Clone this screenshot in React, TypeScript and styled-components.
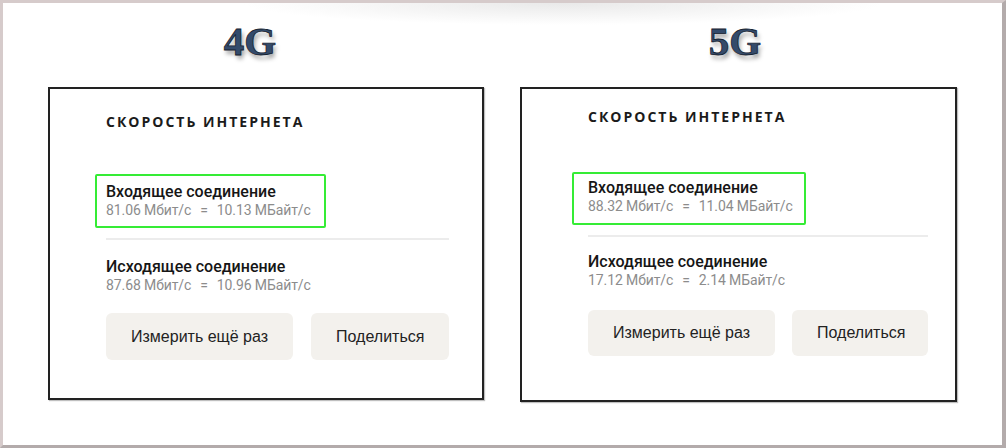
import React from "react";
import styled, { createGlobalStyle } from "styled-components";

const GlobalStyle = createGlobalStyle`
  html, body { margin: 0; padding: 0; background: #ffffff; }
  * { box-sizing: border-box; }
`;

type Spacing = {
  pt: number;
  pl: number;
  pr: number;
  pb: number;
  headGap: number;
  boxPad: string;
  boxShift: number;
  divGap: number;
  outGap: number;
  btnGap: number;
  btnH: number;
  btnSpace: number;
};

type Net = {
  label: string;
  titleShift: number;
  inMbit: string;
  inMB: string;
  outMbit: string;
  outMB: string;
  sp: Spacing;
};

const nets: Net[] = [
  {
    label: "4G",
    titleShift: 32,
    inMbit: "81.06",
    inMB: "10.13",
    outMbit: "87.68",
    outMB: "10.96",
    sp: {
      pt: 24,
      pl: 56,
      pr: 33,
      pb: 38,
      headGap: 43,
      boxPad: "6px 13px 6px 9px",
      boxShift: 11,
      divGap: 10,
      outGap: 17,
      btnGap: 18,
      btnH: 47,
      btnSpace: 18,
    },
  },
  {
    label: "5G",
    titleShift: 7,
    inMbit: "88.32",
    inMB: "11.04",
    outMbit: "17.12",
    outMB: "2.14",
    sp: {
      pt: 19,
      pl: 66,
      pr: 27,
      pb: 44,
      headGap: 46,
      boxPad: "4px 11px 7px 14px",
      boxShift: 16,
      divGap: 10,
      outGap: 15,
      btnGap: 20,
      btnH: 46,
      btnSpace: 17,
    },
  },
];

const Frame = styled.div`
  width: 1006px;
  height: 448px;
  border-top: 3px solid #d6cbcb;
  border-left: 3px solid #d6cbcb;
  border-right: 4px solid #b3abab;
  border-bottom: 3px solid #b3abab;
  background:
    radial-gradient(ellipse 320px 22px at 560px 0px, #e9e9e9 0%, rgba(255, 255, 255, 0) 100%),
    #ffffff;
  padding: 14px 45px 0 45px;
  display: grid;
  grid-template-columns: 436px 437px;
  column-gap: 36px;
  align-items: start;
`;

const Column = styled.div`
  display: flex;
  flex-direction: column;
`;

const NetTitle = styled.h1<{ $shift: number }>`
  margin: 0 0 22px 0;
  padding-right: ${(p) => p.$shift}px;
  text-align: center;
  font-family: "Liberation Serif", "Times New Roman", serif;
  font-weight: 700;
  font-size: 41px;
  line-height: 48px;
  color: #344b6b;
  -webkit-text-stroke: 0.8px #16212f;
  text-shadow: 2px 4px 4px rgba(0, 0, 0, 0.35);
`;

const Card = styled.section<{ $sp: Spacing }>`
  border: 2px solid #222222;
  box-shadow: 1px 1px 1px rgba(0, 0, 0, 0.25);
  padding: ${(p) => `${p.$sp.pt}px ${p.$sp.pr}px ${p.$sp.pb}px ${p.$sp.pl}px`};
  display: flex;
  flex-direction: column;
  align-items: stretch;
`;

const Heading = styled.h2`
  margin: 0;
  font-family: "Open Sans", "Liberation Sans", sans-serif;
  font-weight: 700;
  font-size: 14px;
  line-height: 18px;
  letter-spacing: 2px;
  color: #1b1b1b;
  white-space: nowrap;
`;

const Highlight = styled.div<{ $sp: Spacing }>`
  align-self: flex-start;
  margin-top: ${(p) => p.$sp.headGap}px;
  margin-left: -${(p) => p.$sp.boxShift}px;
  padding: ${(p) => p.$sp.boxPad};
  border: 2px solid #35ec35;
  border-radius: 2px;
`;

const Block = styled.div<{ $mt?: number }>`
  margin-top: ${(p) => p.$mt ?? 0}px;
  display: flex;
  flex-direction: column;
`;

const ConnTitle = styled.div`
  font-family: Roboto, "Noto Sans", sans-serif;
  font-weight: 500;
  font-size: 16px;
  line-height: 19px;
  color: #161616;
  white-space: nowrap;
`;

const Speeds = styled.div`
  font-family: Roboto, "Noto Sans", sans-serif;
  font-weight: 400;
  font-size: 14px;
  line-height: 19px;
  letter-spacing: -0.1px;
  color: #8c8c8c;
  white-space: nowrap;
`;

const Eq = styled.span`
  margin: 0 9px;
`;

const Divider = styled.hr<{ $mt: number }>`
  margin: ${(p) => p.$mt}px 0 0 0;
  border: none;
  height: 2px;
  background: #ececec;
`;

const Buttons = styled.div<{ $mt: number; $gap: number }>`
  margin-top: ${(p) => p.$mt}px;
  display: flex;
  gap: ${(p) => p.$gap}px;
`;

const Button = styled.button<{ $h: number; $grow?: boolean }>`
  height: ${(p) => p.$h}px;
  flex: ${(p) => (p.$grow ? "1 1 auto" : "0 0 auto")};
  min-width: 0;
  padding: 0 25px;
  border: none;
  border-radius: 6px;
  background: #f3f1ed;
  font-family: "Liberation Sans", Arial, sans-serif;
  font-size: 16px;
  color: #222222;
  white-space: nowrap;
  cursor: pointer;
`;

function SpeedLine({ mbit, mb }: { mbit: string; mb: string }) {
  return (
    <Speeds>
      {mbit} Мбит/с<Eq>=</Eq>
      {mb} МБайт/с
    </Speeds>
  );
}

function SpeedCard({ net }: { net: Net }) {
  const sp = net.sp;
  return (
    <Column>
      <NetTitle $shift={net.titleShift}>{net.label}</NetTitle>
      <Card $sp={sp}>
        <Heading>СКОРОСТЬ ИНТЕРНЕТА</Heading>
        <Highlight $sp={sp}>
          <ConnTitle>Входящее соединение</ConnTitle>
          <SpeedLine mbit={net.inMbit} mb={net.inMB} />
        </Highlight>
        <Divider $mt={sp.divGap} />
        <Block $mt={sp.outGap}>
          <ConnTitle>Исходящее соединение</ConnTitle>
          <SpeedLine mbit={net.outMbit} mb={net.outMB} />
        </Block>
        <Buttons $mt={sp.btnGap} $gap={sp.btnSpace}>
          <Button $h={sp.btnH}>Измерить ещё раз</Button>
          <Button $h={sp.btnH} $grow>
            Поделиться
          </Button>
        </Buttons>
      </Card>
    </Column>
  );
}

export default function App() {
  return (
    <>
      <GlobalStyle />
      <Frame>
        {nets.map((n) => (
          <SpeedCard key={n.label} net={n} />
        ))}
      </Frame>
    </>
  );
}
